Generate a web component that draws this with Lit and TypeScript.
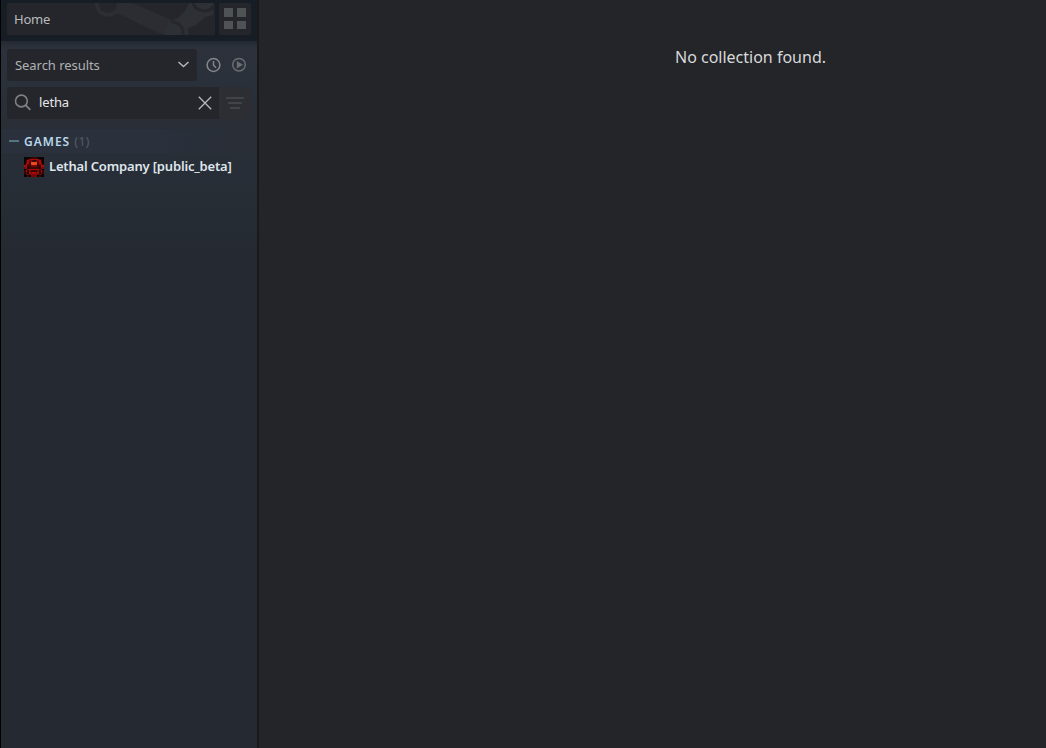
import { LitElement, css, html, svg } from "lit";
import { customElement, property, state } from "lit/decorators.js";

interface Game {
  name: string;
  branch: string;
}

// 12x12 pixel map of the game icon: each digit is a shade in iconShades
const iconRows = [
  "000011110000",
  "001333333100",
  "013221122310",
  "023155551320",
  "132145541231",
  "331122221133",
  "230111111032",
  "012333333210",
  "131211112131",
  "120323323021",
  "012132231210",
  "001022220100",
];
const iconShades = ["#0b0505", "#3a0505", "#780606", "#a80a08", "#d8330c", "#f0491a"];

@customElement("game-row")
export class GameRow extends LitElement {
  @property({ type: String })
  label = "";

  render() {
    return html`
      <div class="game">
        <svg class="icon" viewBox="0 0 12 12" shape-rendering="crispEdges">
          ${iconRows.map((row, y) =>
            [...row].map(
              (c, x) =>
                svg`<rect x=${x} y=${y} width="1" height="1" fill=${iconShades[Number(c)]}></rect>`
            )
          )}
        </svg>
        <span class="label">${this.label}</span>
      </div>
    `;
  }

  static styles = css`
    :host {
      display: block;
    }
    .game {
      display: flex;
      align-items: center;
      height: 28px;
      padding-left: 23px;
      gap: 5px;
    }
    .icon {
      width: 20px;
      height: 20px;
      flex: none;
    }
    .label {
      padding-bottom: 2px;
      color: #dfe5ec;
      font-size: 13px;
      font-weight: 600;
      letter-spacing: -0.17px;
      white-space: nowrap;
    }
  `;
}

@customElement("library-sidebar")
export class LibrarySidebar extends LitElement {
  @state()
  private query = "letha";

  private games: Game[] = [{ name: "Lethal Company", branch: "public_beta" }];

  private onInput(e: InputEvent) {
    this.query = (e.target as HTMLInputElement).value;
  }

  private clear() {
    this.query = "";
  }

  render() {
    return html`
      <div class="top">
        <div class="home">
          <svg class="art" width="120" height="32" viewBox="0 0 120 32">
            <path d="M22 0H38L76 17 69 31H66L20 9Z" fill="#2c2d32" />
            <path d="M2 0A11 11 0 0 0 22 7" fill="none" stroke="#2d2e33" stroke-width="4" />
            <path d="M73 19 83 15 90 8 94 0H118V12L110 14 101 22 93 25V32H69Z" fill="#2d3034" />
            <path d="M76 19A11 11 0 0 1 88 32" fill="none" stroke="#26272c" stroke-width="3" />
            <path d="M98 0A12 12 0 0 0 119 3" fill="none" stroke="#25262b" stroke-width="3" />
          </svg>
          <span class="home-text">Home</span>
        </div>
        <div class="grid-button">
          <i></i><i></i><i></i><i></i>
        </div>
      </div>
      <div class="filters">
        <div class="select">
          <span>Search results</span>
          <svg width="12" height="8" viewBox="0 0 12 8">
            <path d="M1.500 1 6.500 5.500 11.500 1" fill="none" stroke="#b4b6b9" stroke-width="1.500" />
          </svg>
        </div>
        <svg class="round" width="16" height="16" viewBox="0 0 16 16">
          <circle cx="8.500" cy="8" r="6.400" fill="none" stroke="#84878a" stroke-width="1.500" />
          <path d="M8.500 4V8.300L11 10.800" fill="none" stroke="#84878a" stroke-width="1.500" />
        </svg>
        <svg class="round play" width="16" height="16" viewBox="0 0 16 16">
          <circle cx="8" cy="7.700" r="6.300" fill="none" stroke="#696c70" stroke-width="1.500" />
          <path d="M5.800 4V11.400L12 7.700Z" fill="#696c70" />
        </svg>
      </div>
      <div class="search">
        <div class="field">
          <svg width="18" height="18" viewBox="0 0 18 18">
            <circle cx="7.400" cy="7" r="5.900" fill="none" stroke="#7f8083" stroke-width="1.600" />
            <path d="M11.600 11.200 16.300 15.900" stroke="#7f8083" stroke-width="1.800" />
          </svg>
          <input .value=${this.query} @input=${this.onInput} />
          <svg class="clear" width="14" height="14" viewBox="0 0 14 14" @click=${this.clear}>
            <path d="M.8.8 13.200 13.200M13.200.8.8 13.200" stroke="#b8b9bb" stroke-width="1.300" />
          </svg>
        </div>
        <div class="advanced">
          <svg width="18" height="12" viewBox="0 0 18 12">
            <path d="M0 1H18M2 6H16M4 11H14" stroke="#424348" stroke-width="2" />
          </svg>
        </div>
      </div>
      <div class="section">
        <span class="dash"></span>
        <span class="title">GAMES</span>
        <span class="count">(${this.games.length})</span>
      </div>
      ${this.games.map(
        (g) => html`<game-row label="${g.name} [${g.branch}]"></game-row>`
      )}
    `;
  }

  static styles = css`
    :host {
      display: block;
      box-sizing: border-box;
      width: 259px;
      height: 100%;
      flex: none;
      border-left: 1px solid #000;
      border-right: 2px solid #17191b;
      background: linear-gradient(
        #222832 40px,
        #2c313c 48px,
        #2b313b 75px,
        #29303a 90px,
        #292e36 125px,
        #282e37 170px,
        #262d35 205px,
        #252931 265px
      );
    }
    .top {
      display: flex;
      gap: 4px;
      box-sizing: border-box;
      height: 41px;
      padding: 3px 6px 0;
      background: #171d25;
    }
    .home {
      display: grid;
      align-items: center;
      width: 208px;
      height: 32px;
      border-radius: 2px;
      background: #25262b;
      overflow: hidden;
    }
    .art,
    .home-text {
      grid-area: 1 / 1;
    }
    .art {
      justify-self: end;
    }
    .home-text {
      padding-left: 7px;
      color: #b8bcbf;
      font-size: 13px;
      letter-spacing: -0.2px;
    }
    .grid-button {
      display: grid;
      grid-template-columns: 9px 9px;
      grid-template-rows: 9px 8px;
      gap: 4px;
      place-content: center;
      box-sizing: border-box;
      width: 32px;
      height: 32px;
      padding-bottom: 1px;
      border-radius: 2px;
      background: #25262b;
    }
    .grid-button i {
      background: #505355;
    }
    .filters {
      display: flex;
      align-items: center;
      padding: 8px 6px 0;
    }
    .select {
      display: flex;
      align-items: center;
      justify-content: space-between;
      box-sizing: border-box;
      width: 190px;
      height: 32px;
      padding: 0 8px;
      border-radius: 3px;
      background: #25262b;
      color: #b0b2b4;
      font-size: 13px;
      letter-spacing: -0.05px;
    }
    .round {
      margin-left: 8px;
    }
    .round.play {
      margin-left: 10px;
    }
    .search {
      display: flex;
      padding: 6px 6px 0;
    }
    .field {
      display: flex;
      align-items: center;
      box-sizing: border-box;
      width: 212px;
      height: 32px;
      padding: 0 7px;
      border-radius: 3px 0 0 3px;
      background: #25262b;
    }
    input {
      flex: 1;
      min-width: 0;
      padding: 0 0 2px 7px;
      border: 0;
      outline: 0;
      background: none;
      color: #e6e7e9;
      font: inherit;
      font-size: 13px;
      letter-spacing: -0.15px;
    }
    .advanced {
      display: grid;
      place-items: center;
      width: 32px;
      height: 32px;
      border-radius: 3px;
      background: #2d2e33;
    }
    .section {
      display: flex;
      align-items: center;
      height: 24px;
      margin-top: 10px;
      padding-left: 8px;
      background: linear-gradient(90deg, #2a303c 60%, #292e36);
      font-size: 12px;
    }
    .dash {
      width: 10px;
      height: 2px;
      margin-right: 5px;
      background: #557482;
    }
    .title {
      color: #b9d7ea;
      font-weight: 600;
      letter-spacing: 1px;
    }
    .count {
      margin-left: 4px;
      color: #565b63;
      font-size: 13px;
    }
  `;
}

@customElement("app-root")
export class AppRoot extends LitElement {
  render() {
    return html`
      <library-sidebar></library-sidebar>
      <main class="content">
        <p class="message">No collection found.</p>
      </main>
    `;
  }

  static styles = css`
    :host {
      display: flex;
      height: 100vh;
      overflow: hidden;
      background: #242529;
      font-family: "Noto Sans", "Open Sans", sans-serif;
    }
    .content {
      flex: 1;
      padding: 45px 0 0 196px;
      text-align: center;
    }
    .message {
      margin: 0;
      color: #d8d9da;
      font-size: 16px;
      line-height: 24px;
    }
  `;
}

declare global {
  interface HTMLElementTagNameMap {
    "app-root": AppRoot;
    "library-sidebar": LibrarySidebar;
    "game-row": GameRow;
  }
}
